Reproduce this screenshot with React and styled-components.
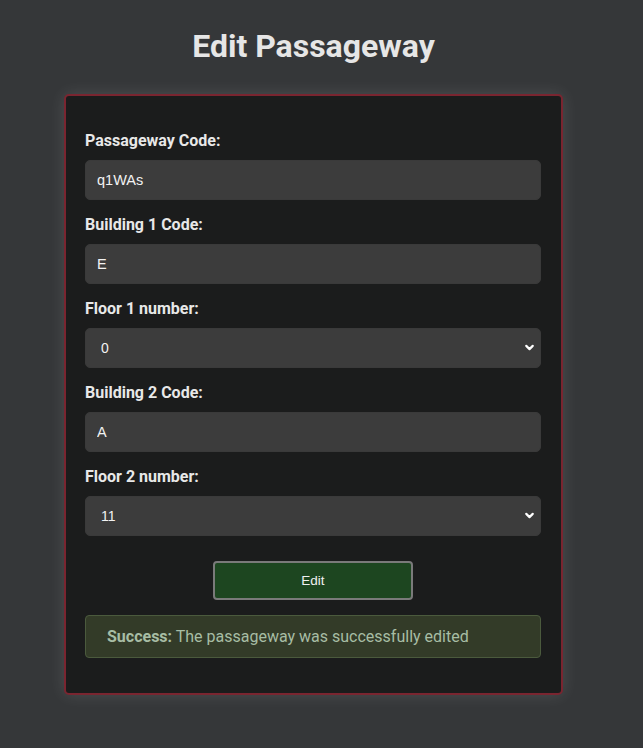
import React from "react"
import styled, { createGlobalStyle } from "styled-components"
import { ChevronDown } from "lucide-react"

const Global = createGlobalStyle`
  html, body {
    margin: 0;
    padding: 0;
    background: #353739;
  }
  body {
    font-family: Roboto, "Liberation Sans", sans-serif;
  }
`

const fields = [
    { label: "Passageway Code:", value: "q1WAs" },
    { label: "Building 1 Code:", value: "E" },
    { label: "Floor 1 number:", value: "0", select: true },
    { label: "Building 2 Code:", value: "A" },
    { label: "Floor 2 number:", value: "11", select: true },
]

const App = () => {
    return (
        <Page>
            <Global />
            <Title>Edit Passageway</Title>
            <Card>
                <Form onSubmit={e => e.preventDefault()}>
                    {fields.map(f => (
                        <Field key={f.label}>
                            <Label>{f.label}</Label>
                            {f.select ? (
                                <SelectWrap>
                                    <Select defaultValue={f.value}>
                                        <option value={f.value}>{f.value}</option>
                                    </Select>
                                    <Chevron>
                                        <ChevronDown size={13} strokeWidth={4} />
                                    </Chevron>
                                </SelectWrap>
                            ) : (
                                <Input defaultValue={f.value} />
                            )}
                        </Field>
                    ))}
                    <Button type="submit">Edit</Button>
                    <Alert>
                        <strong>Success:</strong> The passageway was successfully edited
                    </Alert>
                </Form>
            </Card>
        </Page>
    )
}
export default App

const Page = styled.div`
    display: flex;
    flex-direction: column;
    align-items: center;
    padding: 0 16px 55px 0;
`

const Title = styled.h1`
    font-family: Roboto, sans-serif;
    font-size: 32px;
    font-weight: 700;
    color: #e6e6e6;
    margin: 27px 0 29px;
    line-height: 38px;
`

const Card = styled.div`
    width: 499px;
    box-sizing: border-box;
    background: #1b1c1c;
    border: 2px solid #7a2530;
    border-radius: 5px;
    box-shadow: 0 0 16px rgba(255, 255, 255, 0.12);
    padding: 36px 20px 35px 19px;
`

const Form = styled.form`
    display: flex;
    flex-direction: column;
`

const Field = styled.div`
    display: flex;
    flex-direction: column;
    margin-bottom: 16px;
`

const Label = styled.label`
    font-family: Roboto, sans-serif;
    font-weight: 700;
    font-size: 16px;
    line-height: 18px;
    color: #e8e8e8;
    margin-bottom: 10px;
`

const Input = styled.input`
    height: 40px;
    box-sizing: border-box;
    border: 1px solid #3a3a3a;
    border-radius: 5px;
    background: #3c3c3c;
    color: #f2f2f2;
    font-family: "Liberation Sans", Arial, sans-serif;
    font-size: 14.5px;
    padding: 0 11px;
    outline: none;
`

const SelectWrap = styled.div`
    position: relative;
`

const Select = styled.select`
    appearance: none;
    width: 100%;
    height: 40px;
    box-sizing: border-box;
    border: 1px solid #3a3a3a;
    border-radius: 5px;
    background: #3c3c3c;
    color: #f2f2f2;
    font-family: "Liberation Sans", Arial, sans-serif;
    font-size: 14px;
    padding: 0 15px;
    outline: none;
`

const Chevron = styled.span`
    position: absolute;
    right: 5px;
    top: 13px;
    color: #ffffff;
    pointer-events: none;
    display: flex;
`

const Button = styled.button`
    align-self: center;
    width: 200px;
    height: 39px;
    margin: 9px 0 15px;
    background: #1d4620;
    border: 2px solid #7a7a7a;
    border-radius: 4px;
    color: #f0f0f0;
    font-family: "Liberation Sans", Arial, sans-serif;
    font-size: 13.5px;
    cursor: pointer;
`

const Alert = styled.div`
    height: 43px;
    box-sizing: border-box;
    display: flex;
    align-items: center;
    padding: 0 21px;
    background: #333b28;
    border: 1px solid #4b5a3d;
    border-radius: 4px;
    color: #a7bda4;
    font-family: Roboto, sans-serif;
    font-size: 16px;
    white-space: pre;
    strong {
        font-weight: 700;
    }
`
